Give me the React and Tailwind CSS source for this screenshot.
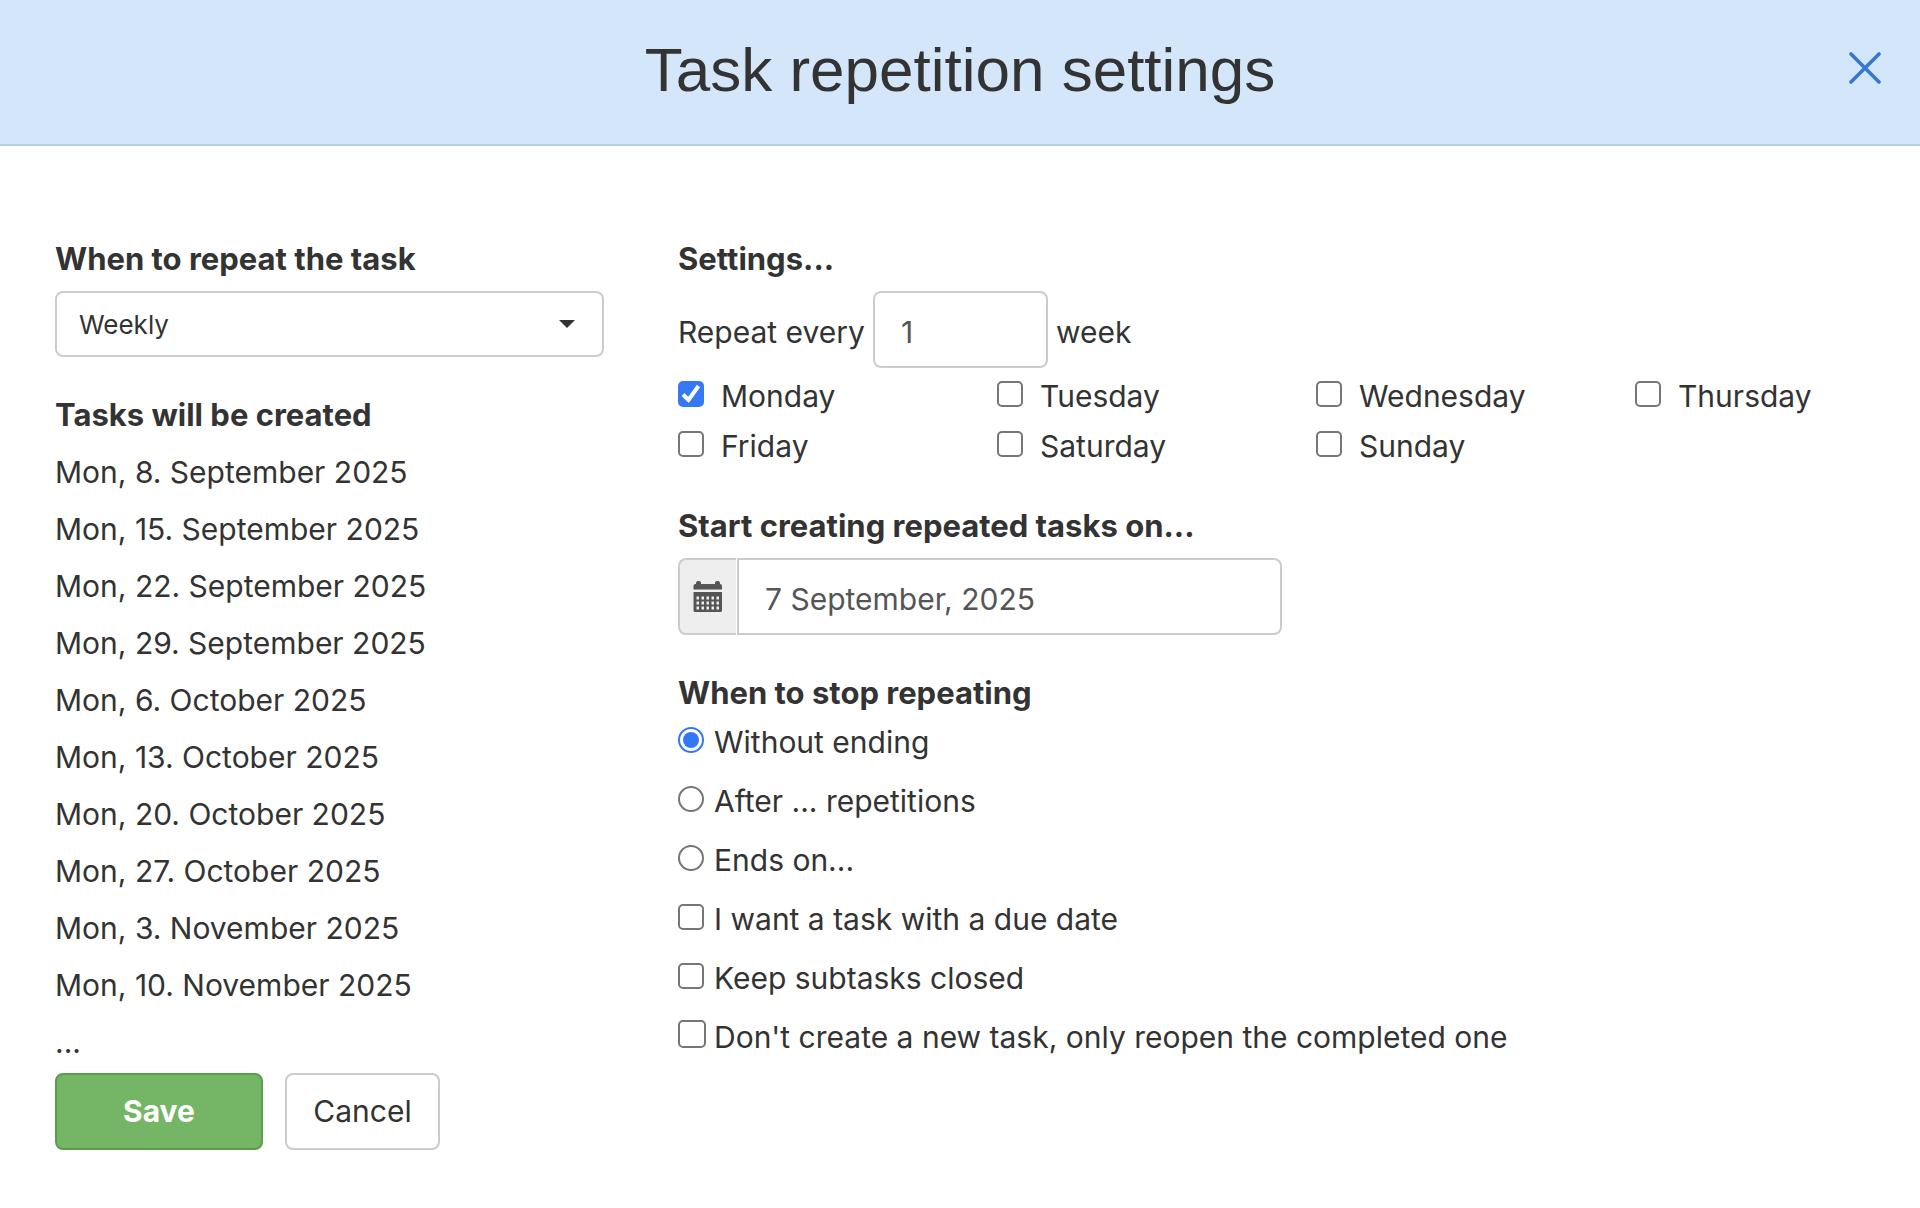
import React from "react";

const dates = [
    "Mon, 8. September 2025",
    "Mon, 15. September 2025",
    "Mon, 22. September 2025",
    "Mon, 29. September 2025",
    "Mon, 6. October 2025",
    "Mon, 13. October 2025",
    "Mon, 20. October 2025",
    "Mon, 27. October 2025",
    "Mon, 3. November 2025",
    "Mon, 10. November 2025",
    "...",
];

const days = ["Monday", "Tuesday", "Wednesday", "Thursday", "Friday", "Saturday", "Sunday"];

const endings = ["Without ending", "After ... repetitions", "Ends on..."];

const Checkbox = ({ defaultChecked, large }) => (
    <span className="grid shrink-0">
        <input
            type="checkbox"
            defaultChecked={defaultChecked}
            className={`peer col-start-1 row-start-1 appearance-none rounded-[5px] border-2 border-[#767676] bg-white checked:border-[#3478f6] checked:bg-[#3478f6] ${
                large ? "size-7" : "size-[26px]"
            }`}
        />
        <svg
            viewBox="0 0 26 26"
            className="pointer-events-none invisible col-start-1 row-start-1 size-[26px] peer-checked:visible"
        >
            <path d="M5 13.5 L10.5 19 L20.5 5" fill="none" stroke="#fff" strokeWidth="4" />
        </svg>
    </span>
);

const CalendarIcon = () => (
    <svg viewBox="0 0 30 32" className="h-8 w-[30px]" fill="#555">
        <path d="M2 3h1V2a2 2 0 0 1 2-2h1a2 2 0 0 1 2 2v1h14V2a2 2 0 0 1 2-2h1a2 2 0 0 1 2 2v1a2 2 0 0 1 2 2v3.500H0.500V5A2 2 0 0 1 2 3z" />
        <path
            fillRule="evenodd"
            d="M.5 11h28.500v18.500a1.500 1.500 0 0 1-1.500 1.500H2a1.500 1.500 0 0 1-1.500-1.500zM3.500 15.500v3h2.500v-3zM8.500 15.500v3h2.500v-3zM13.500 15.500v3h2.500v-3zM18.500 15.500v3h2.500v-3zM23.500 15.500v3h2.500v-3zM3.500 20.500v3h2.500v-3zM8.500 20.500v3h2.500v-3zM13.500 20.500v3h2.500v-3zM18.500 20.500v3h2.500v-3zM23.500 20.500v3h2.500v-3zM3.500 25.500v3h2.500v-3zM8.500 25.500v3h2.500v-3zM13.500 25.500v3h2.500v-3zM18.500 25.500v3h2.500v-3zM23.500 25.500v3h2.500v-3z"
        />
    </svg>
);

const App = () => {
    return (
        <div className="min-h-screen bg-white font-[Inter,'Liberation_Sans',sans-serif] text-[30px] leading-[43px] text-[#333]">
            {/* Header */}
            <header className="grid grid-cols-[1fr_auto_1fr] items-center border-b-2 border-[#b9cce0] bg-[#d3e6fa] px-[37px] pt-7 pb-8">
                <h1 className="col-start-2 font-['Liberation_Sans',sans-serif] text-[62px] leading-[84px]">
                    Task repetition settings
                </h1>
                <button type="button" aria-label="Close" className="mb-1 justify-self-end">
                    <svg viewBox="0 0 36 36" className="size-9" stroke="#3478d1" strokeWidth="3.6" strokeLinecap="round">
                        <path d="M4 4 L32 32 M32 4 L4 32" />
                    </svg>
                </button>
            </header>

            <form className="grid grid-cols-[549fr_1187fr] gap-[74px] px-[55px] pt-[91px]">
                {/* Left column */}
                <div>
                    <label htmlFor="repeat" className="block text-[31px] font-bold">
                        When to repeat the task
                    </label>
                    <div className="mt-[11px] grid items-center">
                        <select
                            id="repeat"
                            defaultValue="Weekly"
                            className="col-start-1 row-start-1 h-[66px] w-full appearance-none rounded-lg border-2 border-[#ccc] bg-white px-[22px] text-[26px]"
                        >
                            <option>Daily</option>
                            <option>Weekly</option>
                            <option>Monthly</option>
                            <option>Yearly</option>
                        </select>
                        <svg
                            viewBox="0 0 16 8"
                            className="pointer-events-none col-start-1 row-start-1 mr-[29px] h-2 w-4 justify-self-end"
                            fill="#333"
                        >
                            <path d="M0 0h16L8 8z" />
                        </svg>
                    </div>

                    <h2 className="mt-9 text-[31px] font-bold">Tasks will be created</h2>
                    <ul className="mt-[15px] flex flex-col gap-[14px]">
                        {dates.map((date) => (
                            <li key={date}>{date}</li>
                        ))}
                    </ul>

                    <div className="mt-[9px] flex gap-[22px]">
                        <button
                            type="button"
                            className="h-[77px] w-[208px] rounded-lg border-2 border-[#5a9e4b] bg-[#75b566] font-bold text-white"
                        >
                            Save
                        </button>
                        <button type="button" className="h-[77px] w-[155px] rounded-lg border-2 border-[#ccc] bg-white">
                            Cancel
                        </button>
                    </div>
                </div>

                {/* Right column */}
                <div>
                    <h2 className="text-[31px] font-bold">Settings...</h2>
                    <div className="mt-[11px] flex items-baseline gap-2">
                        <label htmlFor="every">Repeat every</label>
                        <input
                            id="every"
                            type="text"
                            defaultValue="1"
                            className="h-[77px] w-[175px] rounded-lg border-2 border-[#ccc] px-[26px] pt-1 text-[#555]"
                        />
                        <span>week</span>
                    </div>

                    <div className="mt-[3px] grid grid-cols-[319fr_319fr_319fr_230fr]">
                        {days.map((day) => (
                            <label key={day} className="flex items-baseline gap-[17px] leading-[50px]">
                                <Checkbox defaultChecked={day === "Monday"} />
                                {day}
                            </label>
                        ))}
                    </div>

                    <label htmlFor="start" className="mt-[33px] block text-[31px] font-bold">
                        Start creating repeated tasks on...
                    </label>
                    <div className="mt-[11px] flex w-[604px]">
                        <span className="mr-px flex w-[58px] items-center justify-center rounded-l-lg border-2 border-r-0 border-[#ccc] bg-[#eee]">
                            <CalendarIcon />
                        </span>
                        <input
                            id="start"
                            type="text"
                            defaultValue="7 September, 2025"
                            className="h-[77px] min-w-0 flex-1 rounded-r-lg border-2 border-[#ccc] px-[26px] pt-1 text-[#555]"
                        />
                    </div>

                    <h2 className="mt-9 text-[31px] font-bold">When to stop repeating</h2>
                    <div className="mt-[7px] flex flex-col gap-4">
                        {endings.map((ending, i) => (
                            <label key={ending} className="flex items-baseline gap-[10px]">
                                <input
                                    type="radio"
                                    name="ending"
                                    defaultChecked={i === 0}
                                    className="size-[26px] shrink-0 appearance-none rounded-full border-2 border-[#767676] bg-white bg-clip-content p-[3px] checked:border-[#3478f6] checked:bg-[#3478f6]"
                                />
                                {ending}
                            </label>
                        ))}
                        <label className="flex items-baseline gap-[10px]">
                            <Checkbox />
                            I want a task with a due date
                        </label>
                        <label className="flex items-baseline gap-[10px]">
                            <Checkbox />
                            Keep subtasks closed
                        </label>
                        <label className="flex items-baseline gap-2">
                            <Checkbox large />
                            Don't create a new task, only reopen the completed one
                        </label>
                    </div>
                </div>
            </form>
        </div>
    );
};

export default App;
